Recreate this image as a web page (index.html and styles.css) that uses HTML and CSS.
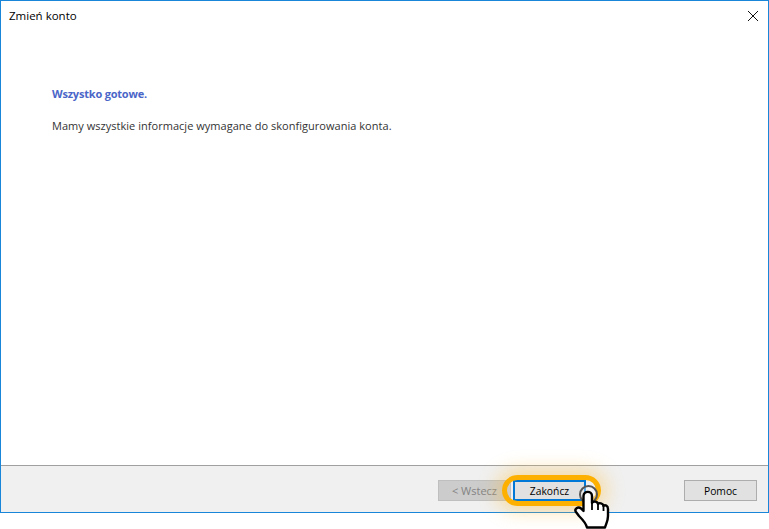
FILE: index.html
```html
<!DOCTYPE html>
<html lang="pl">
<head>
  <meta charset="UTF-8" />
  <title>Zmień konto</title>
  <link rel="stylesheet" href="styles.css">
</head>
<body>
  <div class="window">
    <div class="titlebar">
      <span class="title">Zmień konto</span>
      <svg class="close" width="10" height="10" viewBox="0 0 10 10"><path d="M0 0L10 10M10 0L0 10" stroke="#111" stroke-width="1" fill="none"/></svg>
    </div>
    <div class="content">
      <p class="heading">Wszystko gotowe.</p>
      <p class="message">Mamy wszystkie informacje wymagane do skonfigurowania konta.</p>
    </div>
    <div class="footer">
      <button class="btn btn-back" disabled>&lt; Wstecz</button>
      <div class="finish-wrap">
        <span class="ring"></span>
        <button class="btn btn-finish">Zakończ</button>
        <span class="press"></span>
        <svg class="hand" width="36" height="40" viewBox="0 0 36 40">
          <path d="M9.500 6C9.500 0.500 18 0.500 18 6V13C19 11 23.500 11 24 14C25 12.500 29 13 29.500 16C31 14.500 34 15.500 34 19V26C34 31 32 34 31 37.500H13C12 33 9 30 5 26L2 22C0 19 4 16 7 18.500L9.500 21Z" fill="#fff" stroke="#000" stroke-width="2.400" stroke-linejoin="round"/>
          <path d="M18 13V20M24 14V20M29.500 16V21" stroke="#000" stroke-width="1.800" fill="none"/>
        </svg>
      </div>
      <button class="btn btn-help">Pomoc</button>
    </div>
  </div>
</body>
</html>
```
FILE: styles.css
```css
* {
  box-sizing: border-box;
}
body {
  margin: 0;
  height: 529px;
  background: #fff;
  font-family: "Open Sans", "Noto Sans", sans-serif;
  font-size: 11px;
  color: #1a1a1a;
  overflow: hidden;
}
.window {
  width: 769px;
  height: 513px;
  border: 1px solid #1a86d9;
  display: flex;
  flex-direction: column;
  background: #fff;
}
.titlebar {
  height: 29px;
  padding: 0 10px 0 8px;
  display: flex;
  align-items: center;
  justify-content: space-between;
}
.title {
  font-size: 11.500px;
  color: #000;
}
.close {
  display: block;
}
.content {
  flex: 1;
  padding: 56px 0 0 51px;
}
.heading {
  margin: 0 0 17px;
  font-weight: bold;
  color: #4a66c8;
  line-height: 15px;
  letter-spacing: -0.200px;
}
.message {
  margin: 0;
  line-height: 15px;
  color: #333;
  letter-spacing: 0.030px;
}
.footer {
  height: 47px;
  background: #f0f0f0;
  border-top: 1px solid #a0a0a0;
  padding: 14px 10px 0 437px;
  display: flex;
  align-items: flex-start;
}
.btn {
  width: 73px;
  height: 21px;
  padding: 0;
  font-family: inherit;
  font-size: 10.300px;
  color: #000;
  background: #e1e1e1;
  border: 1px solid #adadad;
}
.btn-back {
  font-size: 11px;
  color: #838383;
  background: #cccccc;
  border-color: #bfbfbf;
}
.finish-wrap {
  position: relative;
  margin-left: 2px;
  height: 21px;
}
.btn-finish {
  display: block;
  border: 2px solid #0078d7;
}
.ring {
  position: absolute;
  left: -11px;
  top: -5px;
  width: 99px;
  height: 31px;
  border: 5px solid #fdb000;
  border-radius: 16px;
  box-shadow: 0 0 18px 6px rgba(253, 190, 60, 0.400);
}
.press {
  position: absolute;
  left: 66px;
  top: 5px;
  width: 19px;
  height: 19px;
  border: 2px solid #555;
  border-radius: 50%;
  background: rgba(255, 255, 255, 0.350);
}
.hand {
  position: absolute;
  left: 61px;
  top: 10px;
}
.btn-help {
  margin-left: 98px;
}
```
